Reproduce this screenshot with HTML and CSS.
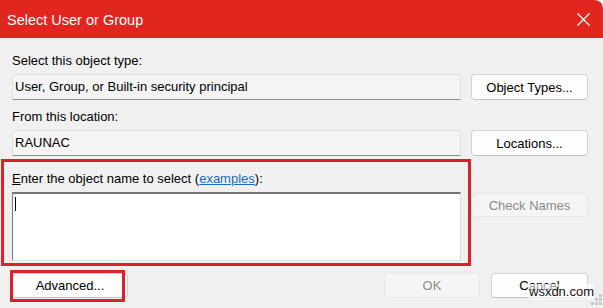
FILE: index.html
```html
<!DOCTYPE html>
<html>
<head>
<meta charset="utf-8">
<link rel="stylesheet" href="styles.css">
</head>
<body>
<div class="dialog">
  <div class="titlebar">
    <span class="title">Select User or Group</span>
    <svg class="close" width="13" height="13" viewBox="0 0 13 13"><path d="M0.5 0.5 L12.5 12.5 M12.5 0.5 L0.5 12.5" stroke="#fff" stroke-width="1.2" fill="none"/></svg>
  </div>
  <div class="main">
    <div class="label">Select this object type:</div>
    <div class="row">
      <div class="field">User, Group, or Built-in security principal</div>
      <button class="btn">Object Types...</button>
    </div>
    <div class="label l2">From this location:</div>
    <div class="row">
      <div class="field">RAUNAC</div>
      <button class="btn">Locations...</button>
    </div>
    <div class="label l3"><u>E</u>nter the object name to select (<a class="link">examples</a>):</div>
    <div class="row top">
      <div class="textarea"><span class="caret"></span></div>
      <button class="btn disabled check">Check Names</button>
    </div>
    <div class="footer">
      <button class="btn adv">Advanced...</button>
      <div class="spacer"></div>
      <button class="btn disabled ok">OK</button>
      <button class="btn cancel">Cancel</button>
    </div>
  </div>
  <div class="hl hl-main"></div>
  <div class="hl hl-adv"></div>
  <div class="wm">wsxdn.com</div>
  <svg class="grip" width="12" height="16" viewBox="0 0 12 16">
    <rect x="8" y="2" width="3" height="3" fill="#c8c8c8"/>
    <rect x="4" y="6" width="3" height="3" fill="#c8c8c8"/>
    <rect x="8" y="6" width="3" height="3" fill="#c8c8c8"/>
    <rect x="0" y="10" width="3" height="3" fill="#c8c8c8"/>
    <rect x="4" y="10" width="3" height="3" fill="#c8c8c8"/>
    <rect x="8" y="10" width="3" height="3" fill="#c8c8c8"/>
  </svg>
</div>
</body>
</html>
```
FILE: styles.css
```css
html, body {
  margin: 0;
  padding: 0;
  background: #ffffff;
}
.dialog {
  position: relative;
  width: 603px;
  height: 308px;
  background: #f0f0f0;
  font-family: "Liberation Sans", Arial, sans-serif;
  font-size: 13px;
  color: #000;
  overflow: hidden;
  border-top-right-radius: 8px;
}
.titlebar {
  height: 38px;
  background: #e1251f;
  color: #fff;
  display: flex;
  align-items: center;
  justify-content: space-between;
  padding: 0 13px 0 7px;
  border-top-right-radius: 8px;
}
.title {
  font-size: 14.5px;
  margin-top: 1px;
}
.close {
  display: block;
}
.main {
  padding: 15px 15px 0 12px;
  display: flex;
  flex-direction: column;
}
.label {
  height: 16px;
  line-height: 16px;
  margin-bottom: 5px;
}
.l2 { margin-top: 9px; }
.l3 { margin-top: 15px; }
.link {
  color: #1a6dc4;
  text-decoration: underline;
}
.row {
  display: flex;
  column-gap: 10px;
  align-items: stretch;
}
.row.top { align-items: flex-start; }
.field {
  width: 449px;
  height: 26px;
  box-sizing: border-box;
  background: #f4f4f4;
  border: 1px solid #dedede;
  border-bottom-color: #8e8e8e;
  border-radius: 3px 3px 0 0;
  padding-left: 2px;
  line-height: 24px;
}
.btn {
  width: 117px;
  height: 26px;
  box-sizing: border-box;
  background: #fdfdfd;
  border: 1px solid #d2d2d2;
  border-bottom-color: #c4c4c4;
  border-radius: 4px;
  font-family: "Liberation Sans", Arial, sans-serif;
  font-size: 13px;
  color: #000;
  padding: 0;
}
.btn.disabled {
  background: #f5f5f5;
  border-color: #e8e8e8;
  color: #8b8b8b;
}
.textarea {
  width: 449px;
  height: 69px;
  box-sizing: border-box;
  background: #fff;
  border-top: 2px solid #757575;
  border-left: 1px solid #7a7a7a;
  border-right: 1px solid #e0e0e0;
  border-bottom: 1px solid #e0e0e0;
  position: relative;
}
.caret {
  position: absolute;
  left: 2px;
  top: 3px;
  width: 1px;
  height: 14px;
  background: #000;
}
.check {
  margin-top: 1px;
  height: 24px;
}
.footer {
  display: flex;
  margin-top: 12px;
  column-gap: 11px;
}
.footer .btn { height: 25px; }
.adv { width: 116px; }
.spacer { flex: 1; }
.ok { width: 96px; }
.cancel { width: 97px; }
.hl {
  position: absolute;
  border: 3px solid #d9232b;
  box-sizing: border-box;
}
.hl-main {
  left: 1px;
  top: 159px;
  width: 470px;
  height: 107px;
}
.hl-adv {
  left: 10px;
  top: 270px;
  width: 115px;
  height: 32px;
}
.wm {
  position: absolute;
  left: 529px;
  top: 284px;
  font-size: 13px;
  line-height: 15px;
  color: #111;
  background: rgba(255,255,255,0.6);
}
.grip {
  position: absolute;
  right: 0;
  bottom: 0;
}
```
